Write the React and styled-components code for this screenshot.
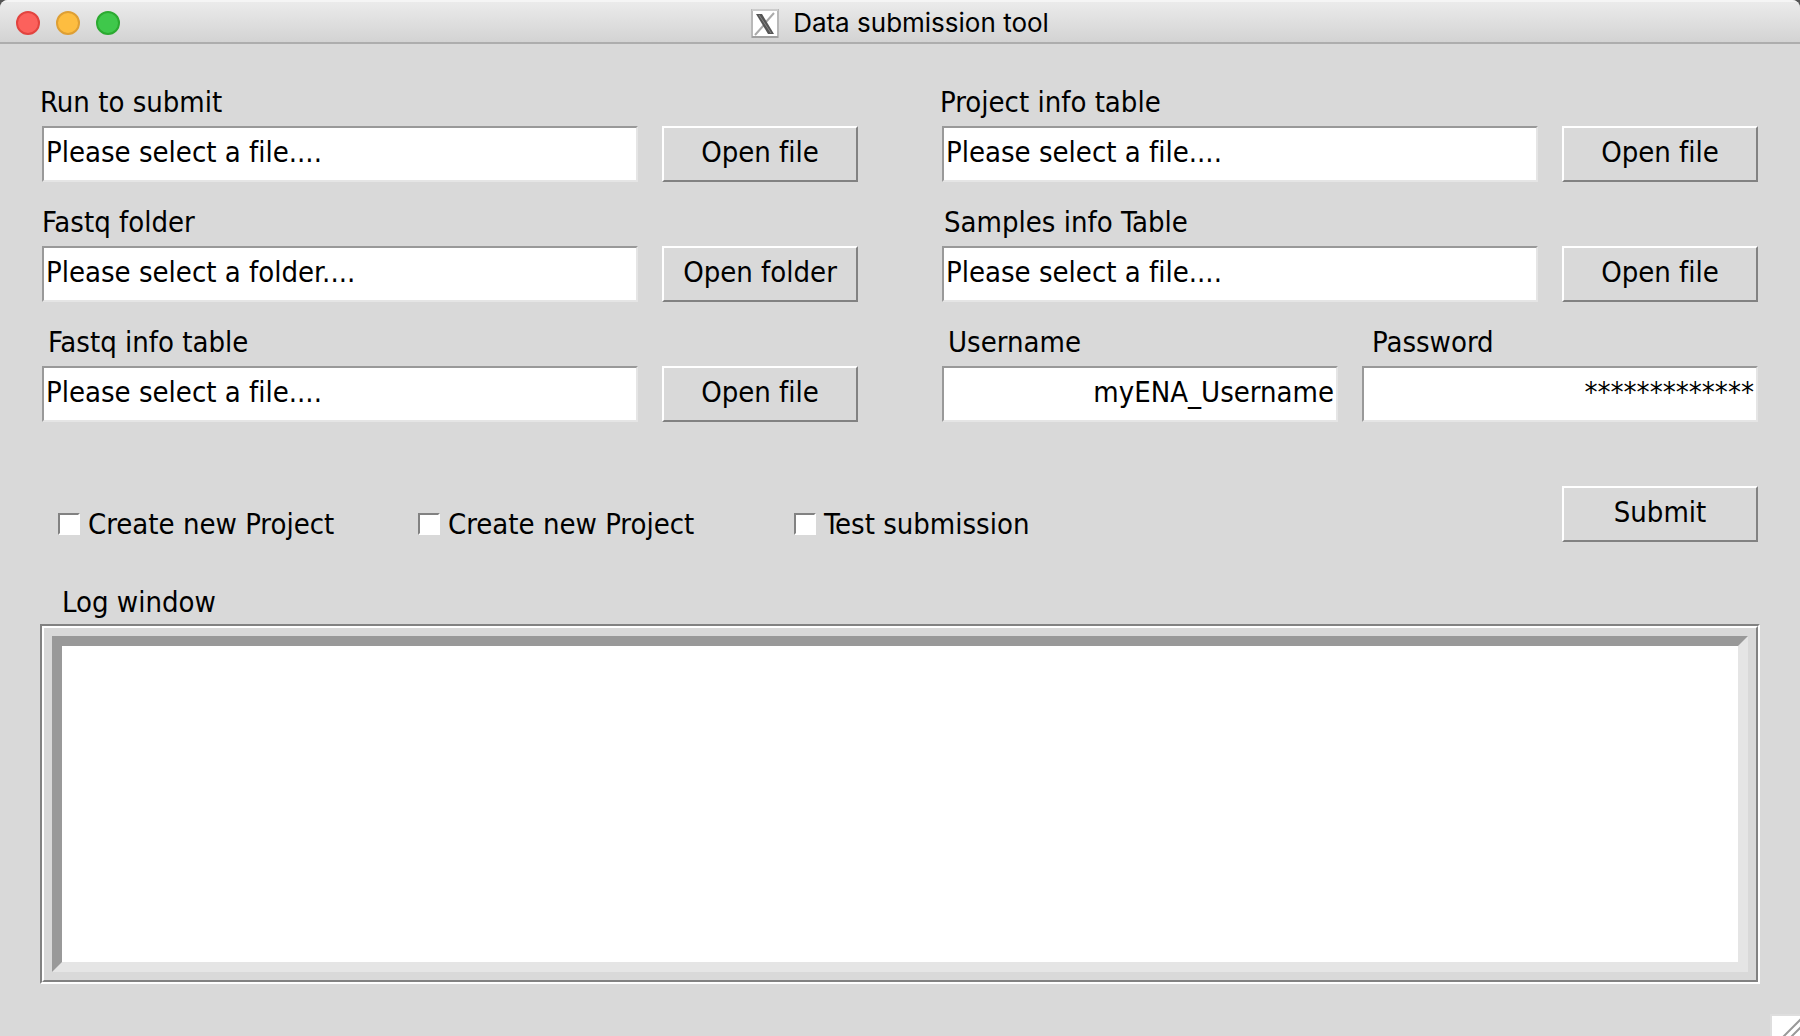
import React from "react";
import styled, { createGlobalStyle } from "styled-components";

const GlobalStyle = createGlobalStyle`
  *, *::before, *::after { box-sizing: border-box; }
  body { margin: 0; background: #555; }
  body, input, button, textarea {
    font-family: "DejaVu Sans Condensed", "DejaVu Sans", Verdana, sans-serif;
    font-size: 29px;
    line-height: 32px;
    font-variant-ligatures: none;
    color: #000;
  }
`;

const Window = styled.div`
  position: relative;
  display: flex;
  flex-direction: column;
  min-height: 100vh;
  background: #d9d9d9;
  border-radius: 8px 8px 0 0;
  overflow: hidden;
`;

const TitleBar = styled.header`
  display: grid;
  grid-template-columns: 1fr auto 1fr;
  align-items: center;
  height: 44px;
  padding: 2px 16px 0;
  border-top: 2px solid #f5f5f5;
  border-bottom: 2px solid #adadad;
  background: linear-gradient(#ebebeb, #d3d3d3);
`;

const Lights = styled.div`
  display: flex;
  gap: 16px;
`;

const Light = styled.button`
  width: 24px;
  height: 24px;
  padding: 0;
  border: 2px solid ${(p) => p.$rim};
  border-radius: 50%;
  background: ${(p) => p.$fill};
`;

const Title = styled.h1`
  display: flex;
  align-items: center;
  gap: 14px;
  margin: 0;
  font: 400 26px/32px Inter, Roboto, sans-serif;
`;

const Body = styled.main`
  display: flex;
  flex: 1;
  flex-direction: column;
  padding: 42px 40px 52px;
`;

const Form = styled.form`
  display: flex;
  flex-direction: column;
  gap: 64px;
  padding: 0 2px;
`;

const Columns = styled.div`
  display: grid;
  grid-template-columns: 1fr 1fr;
  gap: 24px 84px;
`;

const Field = styled.div`
  display: flex;
  flex-direction: column;
  gap: 8px;
  min-width: 0;
`;

const Label = styled.label`
  margin-left: -2px;
  padding-left: ${(p) => p.$indent || 0}px;
`;

const PickRow = styled.div`
  display: grid;
  grid-template-columns: 1fr 196px;
  gap: 24px;
`;

const Credentials = styled.div`
  display: grid;
  grid-template-columns: 1fr 1fr;
  gap: 24px;
`;

const TextBox = styled.input`
  width: 100%;
  min-width: 0;
  height: 56px;
  padding: 0 2px 4px;
  border: 2px solid;
  border-color: #999 #e5e5e5 #e5e5e5 #999;
  border-radius: 0;
  outline: none;
  background: #fff;
  text-align: ${(p) => p.$align || "left"};
`;

const PushButton = styled.button`
  width: 196px;
  height: 56px;
  padding: 0 0 4px;
  border: 2px solid;
  border-color: #fff #828282 #828282 #fff;
  border-radius: 0;
  background: #d9d9d9;
`;

const Actions = styled.div`
  display: flex;
  align-items: flex-end;
  justify-content: space-between;
`;

const Options = styled.div`
  display: grid;
  grid-template-columns: 360px 376px auto;
  padding: 0 16px 2px;
`;

const Option = styled.label`
  display: flex;
  align-items: center;
  gap: 8px;
  white-space: nowrap;
`;

const Tick = styled.input`
  appearance: none;
  width: 22px;
  height: 22px;
  margin: 0;
  border: 2px solid;
  border-color: #828282 #fff #fff #828282;
  background: #fff;
  &:checked { background: #b03060; }
`;

const LogSection = styled.section`
  display: flex;
  flex: 1;
  flex-direction: column;
  gap: 6px;
  margin-top: 44px;
`;

const LogLabel = styled.label`
  padding-left: 22px;
`;

const LogFrame = styled.div`
  display: flex;
  flex: 1;
  border: 2px solid;
  border-color: #828282 #fff #fff #828282;
`;

const LogRidge = styled.div`
  display: flex;
  flex: 1;
  padding: 8px;
  border: 2px solid;
  border-color: #fff #828282 #828282 #fff;
`;

const LogText = styled.textarea`
  flex: 1;
  min-height: 160px;
  padding: 2px;
  border: 10px solid;
  border-color: #999 #e5e5e5 #e5e5e5 #999;
  border-radius: 0;
  outline: none;
  resize: none;
  background: #fff;
`;

const Grip = styled.svg`
  position: absolute;
  right: 0;
  bottom: 0;
`;

function XIcon() {
  return (
    <svg width="28" height="29" viewBox="0 0 28 29" aria-hidden="true">
      <rect x="1" y="1" width="26" height="27" fill="#fff" stroke="#b8b8b8" strokeWidth="2" />
      <path d="M1 1H27" stroke="#ccc" strokeWidth="2" />
      <path d="M1 28H27" stroke="#a0a0a0" strokeWidth="2" />
      <path d="M23 4L15 13M13 16L4 26" stroke="#aaa" strokeWidth="2" />
      <path d="M5 5H11L23 25H17Z" fill="#555" />
      <path d="M8 6L20 24" stroke="#888" strokeWidth="1" />
    </svg>
  );
}

function FilePicker({ id, label, value, action = "Open file", indent }) {
  return (
    <Field>
      <Label htmlFor={id} $indent={indent}>{label}</Label>
      <PickRow>
        <TextBox id={id} defaultValue={value} />
        <PushButton type="button">{action}</PushButton>
      </PickRow>
    </Field>
  );
}

const FILE_HINT = "Please select a file....";

export default function App() {
  return (
    <>
      <GlobalStyle />
      <Window>
        <TitleBar>
          <Lights>
            <Light type="button" aria-label="Close" $fill="#fc615c" $rim="#e2443f" />
            <Light type="button" aria-label="Minimize" $fill="#fdbd40" $rim="#de9f34" />
            <Light type="button" aria-label="Zoom" $fill="#3fc84b" $rim="#2caa31" />
          </Lights>
          <Title>
            <XIcon />
            Data submission tool
          </Title>
        </TitleBar>
        <Body>
          <Form onSubmit={(e) => e.preventDefault()}>
            <Columns>
              <FilePicker id="run" label="Run to submit" value={FILE_HINT} />
              <FilePicker id="project" label="Project info table" value={FILE_HINT} />
              <FilePicker id="folder" label="Fastq folder" value="Please select a folder...." action="Open folder" indent={2} />
              <FilePicker id="samples" label="Samples info Table" value={FILE_HINT} indent={4} />
              <FilePicker id="fastq" label="Fastq info table" value={FILE_HINT} indent={8} />
              <Credentials>
                <Field>
                  <Label htmlFor="user" $indent={8}>Username</Label>
                  <TextBox id="user" defaultValue="myENA_Username" $align="right" />
                </Field>
                <Field>
                  <Label htmlFor="pass" $indent={12}>Password</Label>
                  <TextBox id="pass" autoComplete="off" defaultValue="*************" $align="right" />
                </Field>
              </Credentials>
            </Columns>
            <Actions>
              <Options>
                <Option><Tick type="checkbox" />Create new Project</Option>
                <Option><Tick type="checkbox" />Create new Project</Option>
                <Option><Tick type="checkbox" />Test submission</Option>
              </Options>
              <PushButton type="submit">Submit</PushButton>
            </Actions>
          </Form>
          <LogSection>
            <LogLabel htmlFor="log">Log window</LogLabel>
            <LogFrame>
              <LogRidge>
                <LogText id="log" />
              </LogRidge>
            </LogFrame>
          </LogSection>
        </Body>
        <Grip width="30" height="22" viewBox="0 0 30 22" aria-hidden="true">
          <rect width="30" height="22" fill="#dedede" />
          <rect x="2" y="2" width="28" height="20" fill="#fff" />
          <path d="M12 24L32 4M20 24L32 12" stroke="#999" strokeWidth="2" />
        </Grip>
      </Window>
    </>
  );
}
